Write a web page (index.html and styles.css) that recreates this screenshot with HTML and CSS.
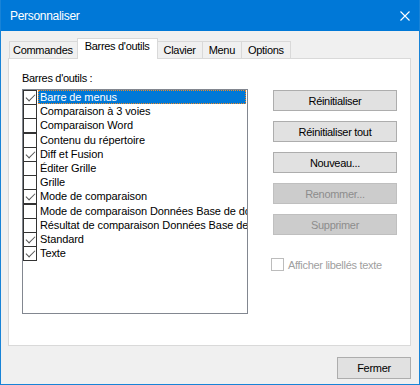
FILE: index.html
```html
<!DOCTYPE html>
<html lang="fr">
<head>
    <meta charset="UTF-8">
    <title>Personnaliser</title>
    <link rel="stylesheet" href="styles.css">
</head>
<body>
    <div class="window">
        <div class="titlebar">
            <span class="title">Personnaliser</span>
            <svg class="close" width="10" height="10" viewBox="0 0 10 10">
                <path d="M0.5 0.5 L9.5 9.5 M9.5 0.5 L0.5 9.5" stroke="#fff" stroke-width="1.1" fill="none"/>
            </svg>
        </div>

        <div class="tabs">
            <div class="tab">Commandes</div>
            <div class="tab active">Barres d'outils</div>
            <div class="tab">Clavier</div>
            <div class="tab">Menu</div>
            <div class="tab">Options</div>
        </div>

        <div class="panel">
            <div class="left-col">
                <div class="label">Barres d'outils :</div>
                <div class="listbox">
                    <div class="row"><span class="box checked"></span><span class="item selected">Barre de menus</span></div>
                    <div class="row"><span class="box"></span><span class="item">Comparaison à 3 voies</span></div>
                    <div class="row"><span class="box"></span><span class="item">Comparaison Word</span></div>
                    <div class="row"><span class="box"></span><span class="item">Contenu du répertoire</span></div>
                    <div class="row"><span class="box checked"></span><span class="item">Diff et Fusion</span></div>
                    <div class="row"><span class="box"></span><span class="item">Éditer Grille</span></div>
                    <div class="row"><span class="box"></span><span class="item">Grille</span></div>
                    <div class="row"><span class="box checked"></span><span class="item">Mode de comparaison</span></div>
                    <div class="row"><span class="box"></span><span class="item">Mode de comparaison Données Base de données</span></div>
                    <div class="row"><span class="box"></span><span class="item">Résultat de comparaison Données Base de données</span></div>
                    <div class="row"><span class="box checked"></span><span class="item">Standard</span></div>
                    <div class="row"><span class="box checked"></span><span class="item">Texte</span></div>
                </div>
            </div>

            <div class="right-col">
                <button class="btn">Réinitialiser</button>
                <button class="btn">Réinitialiser tout</button>
                <button class="btn">Nouveau...</button>
                <button class="btn" disabled>Renommer...</button>
                <button class="btn" disabled>Supprimer</button>
                <label class="option">
                    <span class="small-box"></span>
                    <span>Afficher libellés texte</span>
                </label>
            </div>
        </div>

        <div class="footer">
            <button class="btn close-btn">Fermer</button>
        </div>
    </div>
</body>
</html>
```

FILE: styles.css
```css
body {
    margin: 0;
    font-family: "Liberation Sans", Arial, sans-serif;
    font-size: 11px;
    letter-spacing: -0.3px;
    color: #000;
    background: #fff;
}
.window {
    width: 420px;
    height: 385px;
    box-sizing: border-box;
    border: 1px solid #1883d7;
    border-top: 0;
    background: #f0f0f0;
    display: flex;
    flex-direction: column;
}
.titlebar {
    height: 31px;
    flex-shrink: 0;
    background: #0078d7;
    color: #fff;
    display: flex;
    align-items: center;
    justify-content: space-between;
    padding: 0 9px 0 9px;
    font-size: 12px;
}
.close {
    display: block;
}
.tabs {
    display: flex;
    align-items: flex-end;
    height: 20px;
    margin: 7px 0 0 8px;
    flex-shrink: 0;
}
.tab {
    height: 16px;
    line-height: 16px;
    padding: 0 6px;
    border: 1px solid #d9d9d9;
    border-bottom: 0;
    margin-right: -1px;
    background: #f0f0f0;
}
.tab:first-child {
    padding: 0 4px 0 3px;
}
.tab.active {
    position: relative;
    z-index: 1;
    height: 20px;
    line-height: 14px;
    margin-bottom: -1px;
    background: #fff;
    padding: 0 7px;
}
.panel {
    height: 288px;
    box-sizing: border-box;
    margin: 0 8px 0 7px;
    border: 1px solid #d9d9d9;
    background: #fff;
    display: flex;
    flex-shrink: 0;
}
.left-col {
    padding: 13px 0 0 13px;
}
.label {
    line-height: 13px;
    margin-bottom: 4px;
}
.listbox {
    width: 226px;
    height: 225px;
    box-sizing: border-box;
    border: 1px solid #828790;
    overflow: hidden;
    letter-spacing: -0.1px;
}
.row {
    display: flex;
    height: 14px;
    line-height: 14px;
}
.row + .row {
    margin-top: 0.2px;
}
.box {
    width: 14px;
    height: 15px;
    box-sizing: border-box;
    border: 1px solid #333;
    flex-shrink: 0;
    position: relative;
}
.box.checked::after {
    content: "";
    position: absolute;
    left: 2px;
    top: 3px;
    width: 8px;
    height: 4px;
    border-left: 1px solid #555;
    border-bottom: 1px solid #555;
    transform: rotate(-45deg);
    transform-origin: center;
}
.item {
    margin-left: 1px;
    padding-left: 2px;
    flex: 1;
    white-space: nowrap;
    overflow: hidden;
}
.item.selected {
    background: #0078d7;
    color: #fff;
    outline: 1px dotted #f08a24;
    outline-offset: -1px;
    margin-right: 1px;
}
.right-col {
    margin-left: 23px;
    padding-top: 31px;
    display: flex;
    flex-direction: column;
    align-items: flex-start;
}
.btn {
    font-family: inherit;
    font-size: 11px;
    letter-spacing: -0.3px;
    color: #000;
    background: #e1e1e1;
    border: 1px solid #adadad;
    padding: 0;
    height: 21px;
    width: 124px;
    margin: 0 0 10px 2px;
}
.btn:disabled {
    background: #cccccc;
    border-color: #bfbfbf;
    color: #8d8d8d;
}
.option {
    display: flex;
    align-items: center;
    margin-top: 13px;
    color: #a0a0a0;
}
.small-box {
    width: 13px;
    height: 13px;
    box-sizing: border-box;
    border: 1px solid #bcbcbc;
    margin-right: 4px;
}
.footer {
    display: flex;
    justify-content: flex-end;
    padding: 11px 8px 0 0;
}
.close-btn {
    width: 74px;
    height: 22px;
    margin: 0;
}
```
